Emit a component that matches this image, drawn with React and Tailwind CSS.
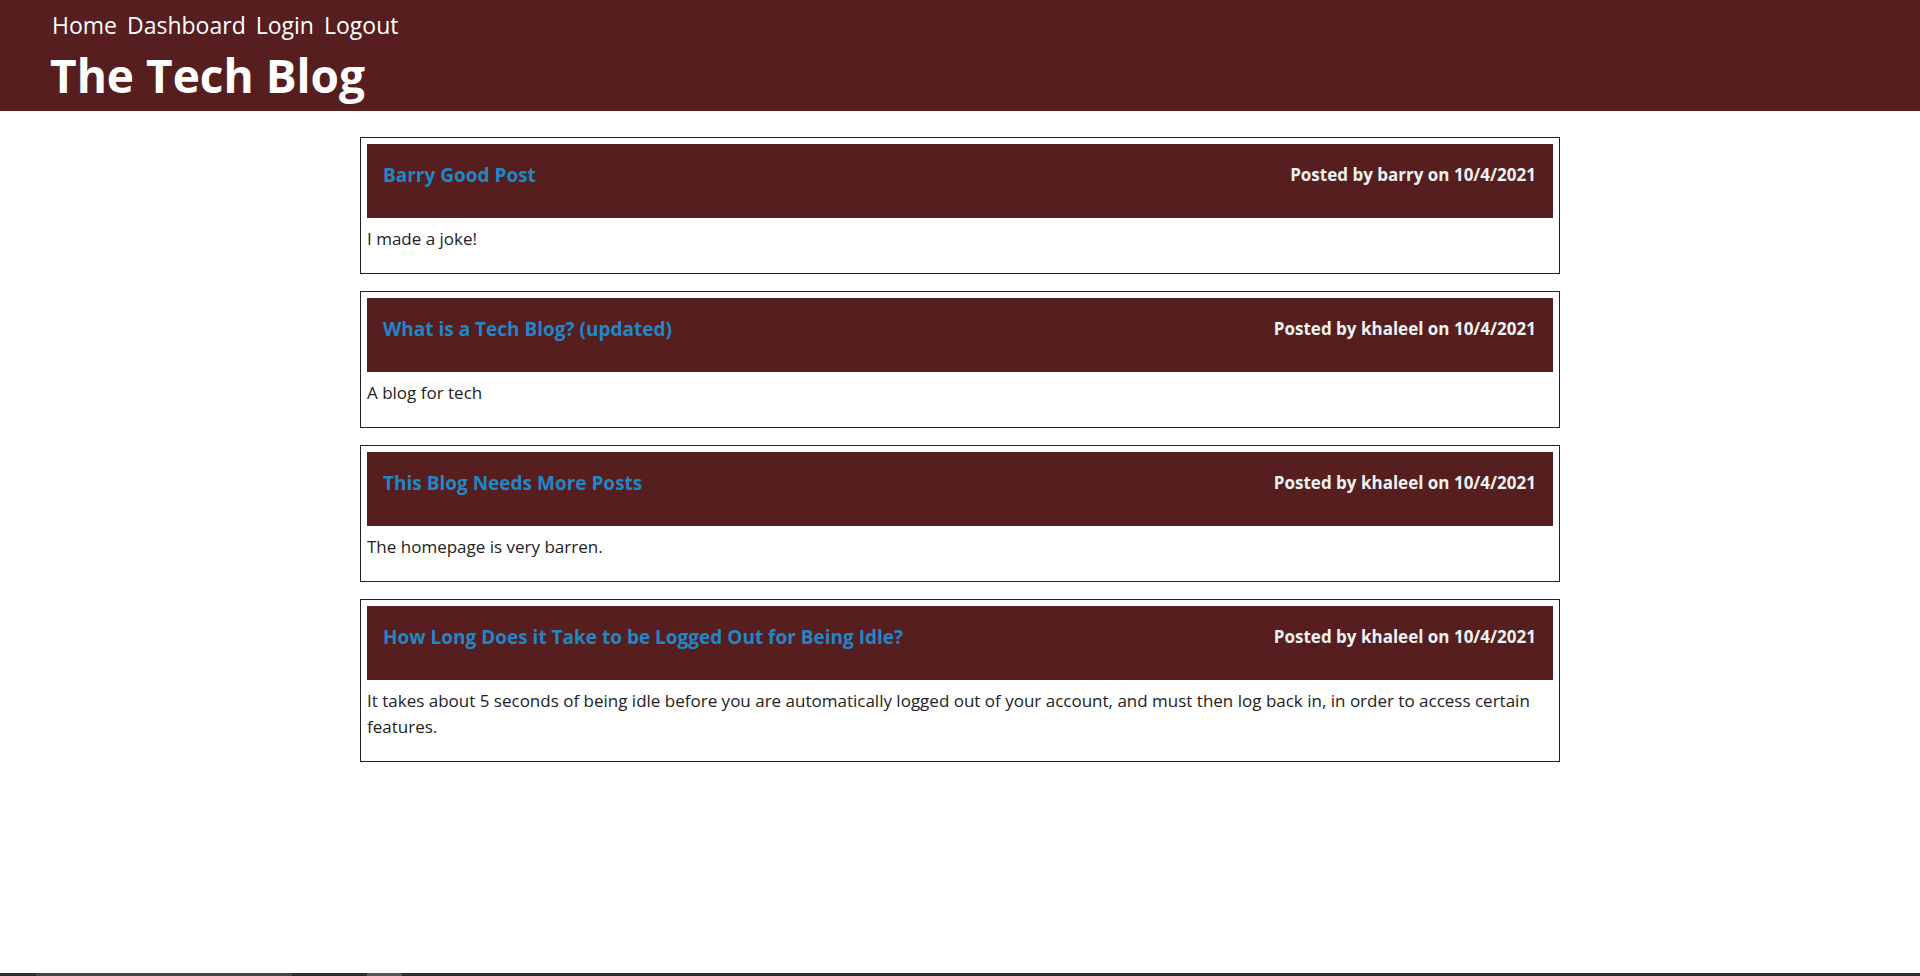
import React from "react";

const posts = [
  {
    title: "Barry Good Post",
    author: "barry",
    date: "10/4/2021",
    body: "I made a joke!",
  },
  {
    title: "What is a Tech Blog? (updated)",
    author: "khaleel",
    date: "10/4/2021",
    body: "A blog for tech",
  },
  {
    title: "This Blog Needs More Posts",
    author: "khaleel",
    date: "10/4/2021",
    body: "The homepage is very barren.",
  },
  {
    title: "How Long Does it Take to be Logged Out for Being Idle?",
    author: "khaleel",
    date: "10/4/2021",
    body: "It takes about 5 seconds of being idle before you are automatically logged out of your account, and must then log back in, in order to access certain features.",
  },
];

function Post({ post }) {
  return (
    <div className="border border-[#222] p-[6px] pb-[21px]">
      <div className="bg-[#561e1f] h-[74px] px-4 flex items-start justify-between pt-[17px]">
        <a href="#" className="text-[#1f87c6] text-[19px] font-bold leading-[28px]">
          {post.title}
        </a>
        <span className="text-[#eef3f4] text-[17px] font-bold leading-[28px] pr-[1px]">
          Posted by {post.author} on {post.date}
        </span>
      </div>
      <p className="text-[#222] text-[17px] leading-[26px] mt-[8px]">{post.body}</p>
    </div>
  );
}

export default function App() {
  return (
    <div
      className="min-h-screen flex flex-col bg-white"
      style={{ fontFamily: '"Open Sans", "Noto Sans", sans-serif' }}
    >
      <header className="bg-[#561e1f] h-[111px] px-[52px] pt-[7px] text-white">
        <nav className="flex gap-[10px] text-[23px] leading-[36px]">
          <a href="#">Home</a>
          <a href="#">Dashboard</a>
          <a href="#">Login</a>
          <a href="#">Logout</a>
        </nav>
        <h1 className="text-[46px] font-bold leading-[56px] mt-[4px] -ml-[2px]">The Tech Blog</h1>
      </header>
      <main className="flex-1 w-[1200px] mx-auto pt-[26px] flex flex-col gap-[17px]">
        {posts.map((post) => (
          <Post key={post.title} post={post} />
        ))}
      </main>
      <div className="h-[3px] bg-[#2d2d2d] flex">
        <div className="w-[36px]" />
        <div className="w-[256px] bg-[#444]" />
        <div className="w-[75px]" />
        <div className="w-[35px] bg-[#555]" />
      </div>
    </div>
  );
}
